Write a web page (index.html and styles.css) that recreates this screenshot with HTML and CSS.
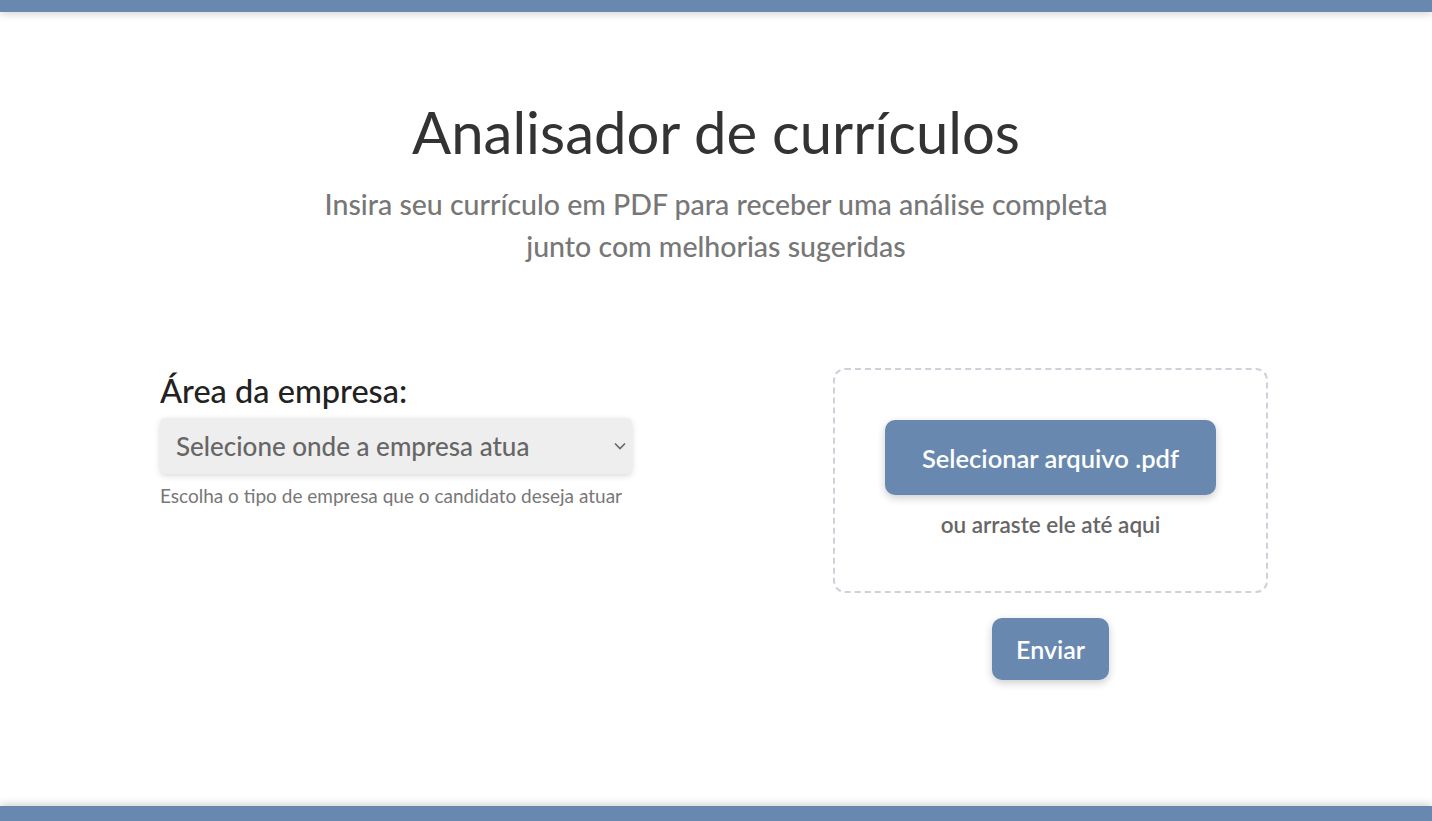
FILE: index.html
```html
<!DOCTYPE html>
<html lang="pt-BR">
<head>
<meta charset="utf-8">
<title>Analisador de currículos</title>
<link rel="stylesheet" href="styles.css">
</head>
<body>
<header class="topbar"></header>
<main class="page">
  <section class="hero">
    <h1 class="title">Analisador de currículos</h1>
    <p class="subtitle">Insira seu currículo em PDF para receber uma análise completa<br>junto com melhorias sugeridas</p>
  </section>
  <section class="form">
    <div class="field">
      <label class="label" for="area">Área da empresa:</label>
      <div class="select-wrap">
        <select id="area" class="select">
          <option>Selecione onde a empresa atua</option>
        </select>
        <svg class="chevron" width="12" height="8" viewBox="0 0 12 8"><path d="M1 1.5 L6 6.5 L11 1.5" fill="none" stroke="#666" stroke-width="1.6"/></svg>
      </div>
      <p class="help">Escolha o tipo de empresa que o candidato deseja atuar</p>
    </div>
    <div class="upload-col">
      <div class="dropzone">
        <button class="btn btn-file" type="button">Selecionar arquivo .pdf</button>
        <p class="drop-hint">ou arraste ele até aqui</p>
      </div>
      <button class="btn btn-send" type="button">Enviar</button>
    </div>
  </section>
</main>
<footer class="bottombar"></footer>
</body>
</html>
```
FILE: styles.css
```css
* { box-sizing: border-box; }
html, body { height: 100%; }
body {
  margin: 0;
  font-family: Lato, "Open Sans", sans-serif;
  color: #333;
  background: #fff;
  display: flex;
  flex-direction: column;
  min-height: 100vh;
}
.topbar {
  height: 12px;
  background: #6888b0;
  box-shadow: 0 2px 8px rgba(0,0,0,0.18);
  flex: none;
}
.bottombar {
  height: 15px;
  background: #6888b0;
  box-shadow: 0 -2px 8px rgba(0,0,0,0.18);
  flex: none;
}
.page {
  flex: 1;
  width: 1112px;
  margin: 0 auto;
  display: flex;
  flex-direction: column;
}
.hero {
  text-align: center;
  padding-top: 88px;
}
.title {
  margin: 0;
  font-size: 58px;
  font-weight: 400;
  line-height: 64px;
  color: #333;
}
.subtitle {
  margin: 19px 0 0;
  font-size: 28.5px;
  line-height: 42px;
  color: #777;
  font-weight: 500;
}
.form {
  margin-top: 101px;
  display: flex;
  justify-content: space-between;
  align-items: flex-start;
}
.field {
  width: 472px;
  padding-top: 4px;
}
.label {
  display: block;
  font-size: 32.5px;
  line-height: 38px;
  color: #222;
  font-weight: 500;
}
.select-wrap {
  position: relative;
  margin-top: 8px;
}
.select {
  width: 100%;
  height: 56px;
  appearance: none;
  -webkit-appearance: none;
  border: none;
  background: #eee;
  border-radius: 5px;
  box-shadow: 0 2px 6px rgba(0,0,0,0.15);
  padding: 0 40px 0 16px;
  font-family: inherit;
  font-size: 26px;
  font-weight: 500;
  color: #666;
}
.chevron {
  position: absolute;
  right: 6px;
  top: 24px;
}
.help {
  margin: 10px 0 0;
  font-size: 19px;
  color: #777;
  white-space: nowrap;
}
.upload-col {
  width: 435px;
  margin-right: 4px;
  display: flex;
  flex-direction: column;
  align-items: center;
}
.dropzone {
  width: 100%;
  height: 225px;
  border: 2px dashed #cdd2da;
  border-radius: 12px;
  display: flex;
  flex-direction: column;
  align-items: center;
  padding-top: 50px;
}
.btn {
  border: none;
  background: #6888b0;
  color: #fff;
  font-family: inherit;
  font-weight: 600;
  font-size: 25.5px;
  border-radius: 10px;
  box-shadow: 0 3px 8px rgba(0,0,0,0.2);
  cursor: pointer;
}
.btn-file {
  width: 331px;
  height: 75px;
}
.drop-hint {
  margin: 16px 0 0;
  font-size: 22.5px;
  font-weight: 600;
  color: #666;
}
.btn-send {
  margin-top: 25px;
  width: 117px;
  height: 62px;
  font-size: 25px;
}
```
